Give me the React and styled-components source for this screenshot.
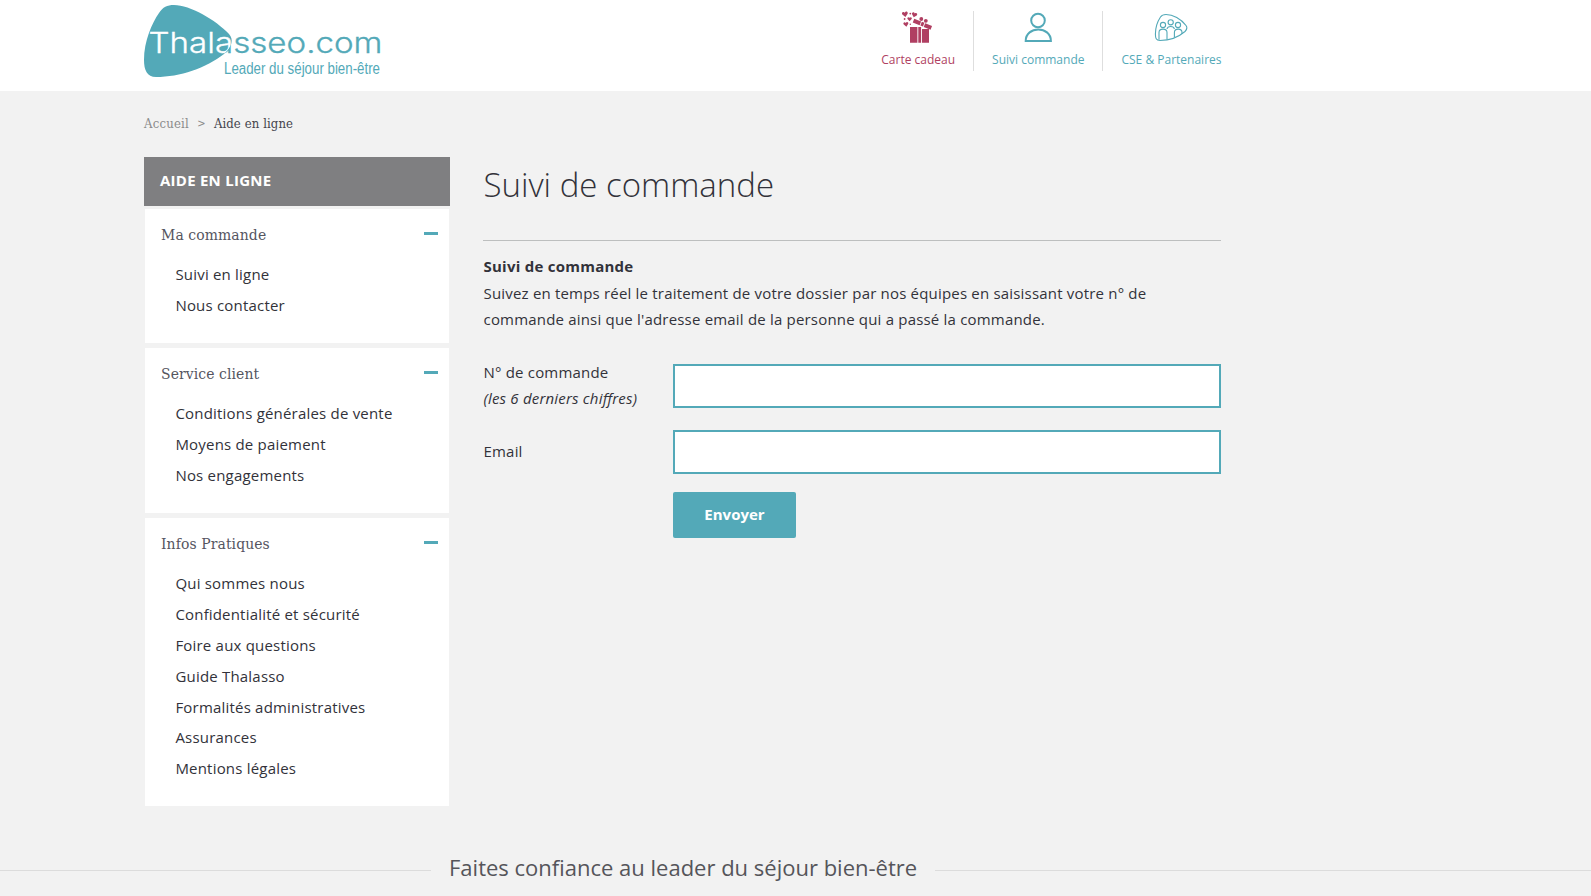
import React from "react";
import styled, { createGlobalStyle } from "styled-components";

const teal = "#53a9b8";
const berry = "#b03f62";
const slab = `"DejaVu Serif Condensed", "DejaVu Serif", serif`;
const pebble =
  "M30 0 C46 0 72 15 85 29 C90 35 88 41 80 49 C62 63 36 72 12 72 C3 72 0 65 0 55 C0 36 8 18 15 8 C19 2 23 0 30 0 Z";

const menu = [
  { title: "Ma commande", links: ["Suivi en ligne", "Nous contacter"] },
  {
    title: "Service client",
    links: ["Conditions générales de vente", "Moyens de paiement", "Nos engagements"],
  },
  {
    title: "Infos Pratiques",
    links: [
      "Qui sommes nous",
      "Confidentialité et sécurité",
      "Foire aux questions",
      "Guide Thalasso",
      "Formalités administratives",
      "Assurances",
      "Mentions légales",
    ],
  },
];

const Logo = () => (
  <LogoSvg viewBox="0 0 280 76" aria-label="Thalasseo.com">
    <defs>
      <clipPath id="pebble">
        <path d={pebble} />
      </clipPath>
    </defs>
    <path fill={teal} d={pebble} />
    <LogoName x="4.5" y="47.7" textLength="234" lengthAdjust="spacingAndGlyphs" fill={teal} stroke={teal}>
      Thalasseo.com
    </LogoName>
    <g clipPath="url(#pebble)">
      <LogoName x="4.5" y="47.7" textLength="234" lengthAdjust="spacingAndGlyphs" fill="#fff" stroke="#fff">
        Thalasseo.com
      </LogoName>
    </g>
    <LogoBaseline x="80" y="69" textLength="156" lengthAdjust="spacingAndGlyphs" fill={teal}>
      Leader du séjour bien-être
    </LogoBaseline>
  </LogoSvg>
);

const heart = "M0 2.6 L-2.4 0 C-3.4 -1.6 -1.2 -3.2 0 -1.4 C1.2 -3.2 3.4 -1.6 2.4 0 Z";

const GiftIcon = () => (
  <svg width="32" height="34" viewBox="0 0 32 34" fill={berry}>
    <path d={heart} transform="translate(3 3.2) scale(1.1) rotate(-8)" />
    <path d={heart} transform="translate(12.4 3.8) scale(1) rotate(15)" />
    <path d={heart} transform="translate(7.6 8) scale(.85)" />
    <path d={heart} transform="translate(4 13.2) scale(.95) rotate(-10)" />
    <circle cx="8.3" cy="2.6" r="0.9" />
    <circle cx="2.6" cy="8" r="0.9" />
    <circle cx="8.3" cy="13.2" r="0.7" />
    <circle cx="19.3" cy="8" r="1.9" />
    <circle cx="23.8" cy="9.8" r="1.9" />
    <g transform="translate(20.4 13.2) rotate(22)">
      <path d="M-9.6 -2H-2.2V2H-9.6zM-1.4 -2H1.4V2H-1.4zM2.2 -2H9.6V2H2.2z" />
    </g>
    <path d="M8 16h7.4v15.8H8zM16.3 16h2.8v15.8h-2.8zM20 18h7v13.8h-7z" />
  </svg>
);

const UserIcon = () => (
  <svg width="32" height="34" viewBox="0 0 32 34" fill="none" stroke={teal} strokeWidth="2">
    <circle cx="16" cy="9.5" r="6.8" />
    <path d="M3.7 30 C3.7 14.7 28.9 14.7 28.9 30 Z" />
  </svg>
);

const PartnersIcon = () => (
  <svg width="34" height="34" viewBox="0 0 34 34" fill="none" stroke={teal} strokeWidth="1.1">
    <path d="M12 3.5 C19 3.5 27 8 32 14.5 C33.8 17 33 18.5 31 20.5 C24 26.5 15 29.5 6 29.5 C2 29.5 1.4 27 1.4 23 C1.4 16 3.5 10.5 6.5 6 C8 3.8 9 3.5 12 3.5 Z" />
    <circle cx="9" cy="14" r="2.6" />
    <circle cx="16.7" cy="11.3" r="2.6" />
    <circle cx="24" cy="14" r="2.6" />
    <path d="M5 28.8 V21.5 C5 17 13 17 13 21.5 V28.6" />
    <path d="M13 18 C13.6 14.6 19.8 14.6 20.4 18" />
    <path d="M20.4 26.2 V21.5 C20.4 17 28 17 28 21.5 V23" />
  </svg>
);

export default function App() {
  return (
    <>
      <GlobalStyle />
      <Header>
        <HeaderInner>
          <Logo />
          <TopNav>
            <TopLink color={berry}>
              <GiftIcon />
              Carte cadeau
            </TopLink>
            <TopLink>
              <UserIcon />
              Suivi commande
            </TopLink>
            <TopLink>
              <PartnersIcon />
              CSE &amp; Partenaires
            </TopLink>
          </TopNav>
        </HeaderInner>
      </Header>
      <Breadcrumb>
        <a>Accueil</a>
        <span>&gt;</span>
        <strong>Aide en ligne</strong>
      </Breadcrumb>
      <Page>
        <Sidebar>
          <SidebarTitle>AIDE EN LIGNE</SidebarTitle>
          {menu.map((group) => (
            <Panel key={group.title}>
              <PanelHead>
                <h2>{group.title}</h2>
                <Minus />
              </PanelHead>
              <ul>
                {group.links.map((link) => (
                  <li key={link}>{link}</li>
                ))}
              </ul>
            </Panel>
          ))}
        </Sidebar>
        <Content>
          <Title>Suivi de commande</Title>
          <Intro>
            <strong>Suivi de commande</strong>
            <p>
              Suivez en temps réel le traitement de votre dossier par nos équipes en saisissant votre n° de
              commande ainsi que l'adresse email de la personne qui a passé la commande.
            </p>
          </Intro>
          <Form>
            <label htmlFor="order">
              N° de commande
              <br />
              <em>(les 6 derniers chiffres)</em>
            </label>
            <Input id="order" type="text" />
            <label htmlFor="email">Email</label>
            <Input id="email" type="text" />
            <Submit type="button">Envoyer</Submit>
          </Form>
        </Content>
      </Page>
      <Trust>
        <h3>Faites confiance au leader du séjour bien-être</h3>
      </Trust>
    </>
  );
}

const GlobalStyle = createGlobalStyle`
  * {
    box-sizing: border-box;
    margin: 0;
    padding: 0;
  }
  body {
    background: #f2f2f2;
    color: #32323a;
    font-family: "Open Sans", sans-serif;
    font-size: 15px;
    font-feature-settings: "liga" 1;
    overflow: hidden;
  }
  ul {
    list-style: none;
  }
`;

const Header = styled.header`
  height: 91px;
  background: #fff;
`;

const HeaderInner = styled.div`
  display: flex;
  justify-content: space-between;
  width: 1077.5px;
  margin-left: 144px;
`;

const LogoSvg = styled.svg`
  width: 280px;
  height: 76px;
  margin-top: 5px;
`;

const LogoName = styled.text`
  font-family: Inter, sans-serif;
  font-size: 28px;
  font-weight: 300;
  stroke-width: 0.3px;
`;

const LogoBaseline = styled.text`
  font-family: "Liberation Sans", sans-serif;
  font-size: 16px;
`;

const TopNav = styled.nav`
  display: flex;
  height: 60px;
  margin-top: 11px;
`;

const TopLink = styled.a`
  display: flex;
  flex-direction: column;
  align-items: center;
  padding: 0 18px;
  color: ${(props) => props.color || teal};
  font-size: 12px;
  line-height: 16px;
  white-space: nowrap;
  svg {
    margin-bottom: 7px;
  }
  & + & {
    border-left: 1px solid #dedede;
  }
  &:last-child {
    padding-right: 0;
  }
`;

const Breadcrumb = styled.div`
  display: flex;
  height: 66px;
  padding: 24px 0 0 144px;
  font-family: ${slab};
  font-size: 13px;
  line-height: 18px;
  letter-spacing: 0.2px;
  color: #8b8b8b;
  span {
    width: 25px;
    text-align: center;
    font-size: 11px;
  }
  strong {
    font-weight: normal;
    letter-spacing: 0.1px;
    color: #45454d;
  }
`;

const Page = styled.main`
  display: flex;
  gap: 33px;
  width: 1077px;
  margin-left: 144px;
`;

const Sidebar = styled.aside`
  width: 306px;
`;

const SidebarTitle = styled.div`
  height: 49px;
  margin-bottom: 2.6px;
  padding-left: 16px;
  background: #7f7f81;
  color: #fff;
  font-size: 15px;
  font-weight: bold;
  letter-spacing: 0.25px;
  line-height: 46px;
`;

const Panel = styled.section`
  margin: 0 1px 5px;
  padding: 14px 11px 22.1px 16px;
  background: #fff;
  ul {
    margin-top: 12.2px;
    padding-left: 14.4px;
    letter-spacing: 0.2px;
    line-height: 30.9px;
  }
`;

const PanelHead = styled.div`
  display: flex;
  justify-content: space-between;
  align-items: center;
  height: 24px;
  h2 {
    font-family: ${slab};
    font-size: 15.5px;
    font-weight: normal;
    letter-spacing: 0.1px;
    color: #55555f;
  }
`;

const Minus = styled.span`
  width: 14px;
  height: 3px;
  margin-bottom: 1.4px;
  background: ${teal};
`;

const Content = styled.div`
  flex: 1;
`;

const Title = styled.h1`
  height: 84px;
  padding-left: 0.5px;
  border-bottom: 1px solid #bdbfbf;
  font-size: 33px;
  font-weight: 300;
  line-height: 55px;
`;

const Intro = styled.div`
  padding: 12px 0 0 0.5px;
  letter-spacing: 0.19px;
  line-height: 26px;
  strong {
    display: block;
    margin-bottom: 1px;
    letter-spacing: 0.25px;
  }
`;

const Form = styled.form`
  display: grid;
  grid-template-columns: 190px 548px;
  row-gap: 22px;
  align-items: center;
  margin-top: 32px;
  letter-spacing: 0.19px;
  line-height: 26px;
  label {
    margin: -5px 0 -3px;
    padding-left: 0.5px;
  }
`;

const Input = styled.input`
  height: 44px;
  border: 2px solid ${teal};
  background: #fff;
`;

const Submit = styled.button`
  grid-column: 2;
  width: 123px;
  height: 46px;
  margin-top: -4px;
  padding-bottom: 2px;
  border: none;
  border-radius: 2px;
  background: ${teal};
  color: #fff;
  font: bold 15px "Open Sans", sans-serif;
`;

const Trust = styled.div`
  display: flex;
  align-items: center;
  gap: 18px;
  margin-top: 41px;
  h3 {
    font-size: 22px;
    font-weight: normal;
    color: #55555a;
  }
  &::before {
    content: "";
    width: 431px;
    margin-top: 7px;
    border-top: 1px solid #dcdcdc;
  }
  &::after {
    content: "";
    flex: 1;
    margin-top: 7px;
    border-top: 1px solid #dcdcdc;
  }
`;
